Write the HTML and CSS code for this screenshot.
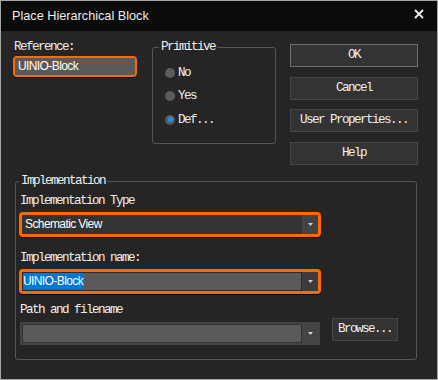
FILE: index.html
```html
<!DOCTYPE html>
<html lang="en">
<head>
    <meta charset="utf-8">
    <title>Place Hierarchical Block</title>
    <link rel="stylesheet" href="styles.css">
</head>
<body>
    <div class="dialog">
        <div class="titlebar">
            <span class="title">Place Hierarchical Block</span>
            <svg class="close" width="10" height="10" viewBox="0 0 10 10">
                <path d="M1 1L9 9M9 1L1 9" stroke="#f2f2f2" stroke-width="1.8"/>
            </svg>
        </div>

        <div class="content">
            <div class="top-row">
                <div class="ref-col">
                    <div class="lbl">Reference:</div>
                    <div class="mark ref-mark">
                        <div class="edit">UINIO-Block</div>
                    </div>
                </div>

                <fieldset class="group primitive">
                    <legend>Primitive</legend>
                    <div class="radio"><span class="dot"></span>No</div>
                    <div class="radio"><span class="dot"></span>Yes</div>
                    <div class="radio"><span class="dot checked"></span>Def...</div>
                </fieldset>

                <div class="buttons">
                    <div class="btn default">OK</div>
                    <div class="btn">Cancel</div>
                    <div class="btn">User Properties...</div>
                    <div class="btn">Help</div>
                </div>
            </div>

            <fieldset class="group impl">
                <legend>Implementation</legend>
                <div class="lbl">Implementation Type</div>
                <div class="mark combo-mark">
                    <div class="combo dark">
                        <span class="combo-text">Schematic View</span>
                        <span class="arrow"><svg width="5" height="3" viewBox="0 0 5 3"><path d="M0 0H5L2.5 3Z" fill="#d0d0d0"/></svg></span>
                    </div>
                </div>

                <div class="lbl name-lbl">Implementation name:</div>
                <div class="mark combo-mark">
                    <div class="combo light">
                        <span class="combo-text"><span class="sel">UINIO-Block</span></span>
                        <span class="arrow"><svg width="5" height="3" viewBox="0 0 5 3"><path d="M0 0H5L2.5 3Z" fill="#d0d0d0"/></svg></span>
                    </div>
                </div>

                <div class="lbl path-lbl">Path and filename</div>
                <div class="path-row">
                    <div class="path-combo">
                        <span class="path-field"></span>
                        <span class="arrow"><svg width="5" height="3" viewBox="0 0 5 3"><path d="M0 0H5L2.5 3Z" fill="#d0d0d0"/></svg></span>
                    </div>
                    <div class="btn browse">Browse...</div>
                </div>
            </fieldset>
        </div>
    </div>
</body>
</html>
```

FILE: styles.css
```css
body {
    margin: 0;
    background-color: #252525;
}

.dialog {
    width: 438px;
    height: 380px;
    box-sizing: border-box;
    border: 1px solid #a6a6a6;
    background-color: #252525;
    color: #f0f0f0;
    font-family: 'Liberation Mono', monospace;
    font-size: 12.6px;
    letter-spacing: -1.56px;
}

.titlebar {
    height: 30px;
    background-color: #0b0b0b;
    display: flex;
    align-items: center;
    justify-content: space-between;
    padding: 0 13px 0 11px;
}

.title {
    font-family: 'Liberation Sans', sans-serif;
    font-size: 12.7px;
    letter-spacing: 0;
    color: #ececec;
}

.close {
    margin-top: -4px;
}

.content {
    padding: 9px 19px 0 12px;
}

.lbl {
    height: 14px;
    line-height: 14px;
    padding-left: 1px;
}

/* top area */
.top-row {
    display: flex;
    align-items: flex-start;
}

.ref-col {
    width: 124px;
}

.mark {
    box-sizing: border-box;
    border: 2px solid #ff6a00;
    border-radius: 4px;
    box-shadow: 0 1px 0 #000;
}

.ref-mark {
    margin-top: 2px;
    height: 21px;
}

.edit {
    height: 17px;
    line-height: 17px;
    background-color: #5a5a5a;
    padding-left: 3px;
    font-family: 'Liberation Sans', sans-serif;
    font-size: 12px;
    letter-spacing: -0.6px;
    color: #fff;
}

.group {
    margin: 0;
    border: 1px solid #555;
    border-radius: 3px;
    min-width: 0;
}

.group legend {
    padding: 0 2px;
    height: 14px;
    line-height: 14px;
}

.primitive {
    width: 124px;
    box-sizing: border-box;
    margin-left: 15px;
    padding: 7px 6px 11px 6px;
}

.radio {
    height: 23.5px;
    display: flex;
    align-items: center;
    margin-left: 6px;
}

.dot {
    width: 10px;
    height: 10px;
    border-radius: 50%;
    background-color: #5c5c5c;
    margin-right: 3px;
    display: flex;
    align-items: center;
    justify-content: center;
}

.dot.checked::after {
    content: "";
    width: 5px;
    height: 5px;
    border-radius: 50%;
    background-color: #1597f2;
}

.buttons {
    width: 128px;
    margin-left: 14px;
    margin-top: 4px;
    display: flex;
    flex-direction: column;
    gap: 9.7px;
}

.btn {
    box-sizing: border-box;
    height: 23px;
    line-height: 21px;
    text-align: center;
    background-color: #333;
    border: 1px solid #474747;
}

.btn.default {
    border-color: #6e6e6e;
}

/* implementation */
.impl {
    margin: 9px 0 0 2px;
    width: 402px;
    box-sizing: border-box;
    padding: 6px 3px 14px 3px;
}

.combo-mark {
    width: 302px;
    height: 25px;
    margin-top: 4px;
    border-width: 3px;
}

.combo {
    display: flex;
    height: 19px;
}

.combo-text {
    flex: 1;
    line-height: 19px;
    font-family: 'Liberation Sans', sans-serif;
    font-size: 12px;
    letter-spacing: -0.6px;
    color: #fff;
}

.combo.dark .combo-text {
    background-color: #333;
    padding-left: 3px;
}

.combo.light .combo-text {
    background-color: #5a5a5a;
    border: 1px solid #2c2c2c;
    padding-left: 0;
    line-height: 17px;
}

.sel {
    background-color: #0078d7;
    display: inline-block;
    line-height: 16px;
    padding-right: 1px;
}

.arrow {
    width: 16px;
    display: flex;
    align-items: center;
    justify-content: center;
    background-color: #434343;
}

.combo.light .arrow {
    background-color: #3c3c3c;
}

.name-lbl {
    margin-top: 14px;
}

.path-lbl {
    margin-top: 9px;
}

.path-row {
    display: flex;
    align-items: flex-start;
    margin-top: 1px;
}

.path-combo {
    margin: 4px 0 0 1px;
    width: 300px;
    height: 23px;
    box-sizing: border-box;
    background-color: #444;
    padding: 2px 2px 2px 2px;
    display: flex;
}

.path-field {
    flex: 1;
    background-color: #5a5a5a;
    border: 1px solid #333;
}

.path-combo .arrow {
    background-color: #444;
}

.browse {
    width: 66px;
    margin-left: 12px;
}
```
